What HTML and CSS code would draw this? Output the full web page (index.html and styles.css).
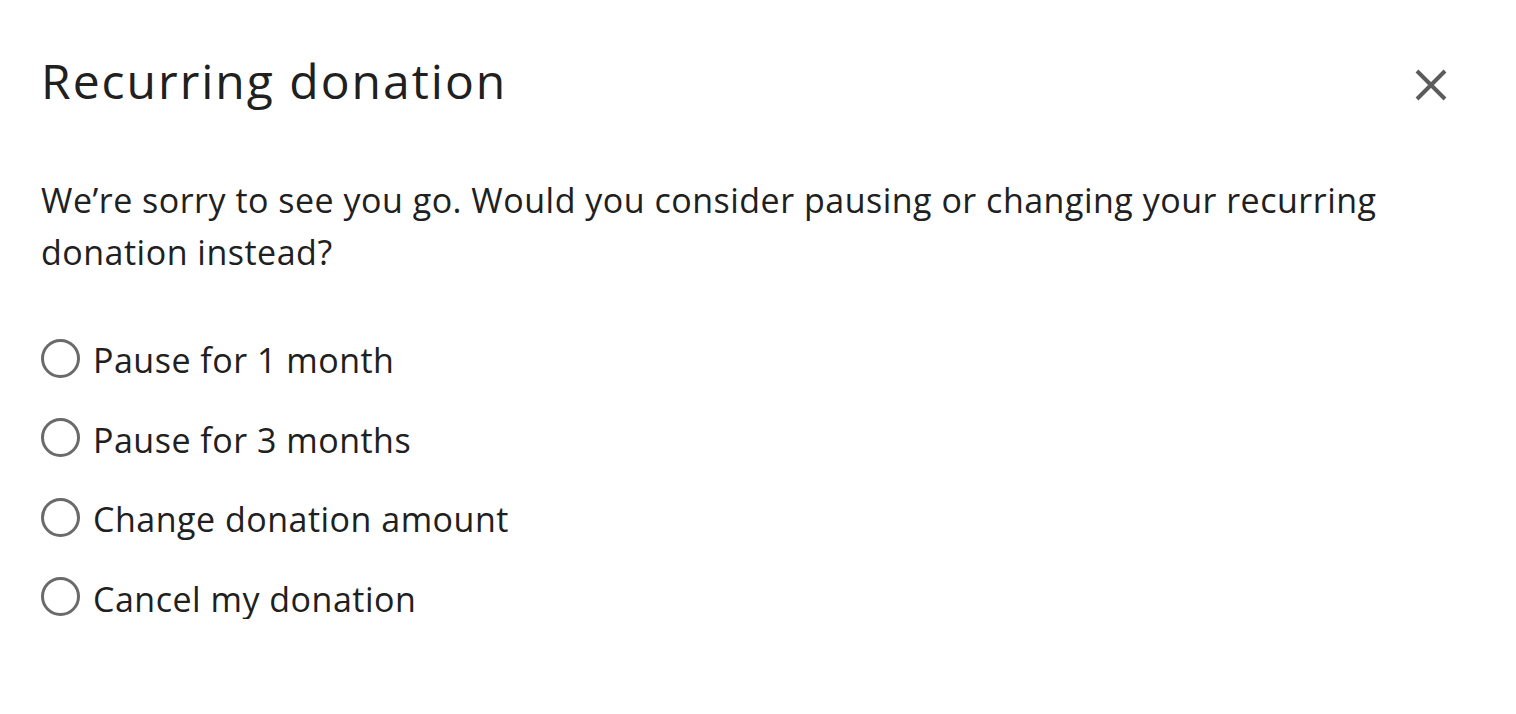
FILE: index.html
```html
<!DOCTYPE html>
<html>
<head>
<meta charset="utf-8">
<link rel="stylesheet" href="styles.css">
</head>
<body>
<div class="dialog">
  <div class="header">
    <h1 class="title">Recurring donation</h1>
    <button class="close" aria-label="Close">
      <svg width="32" height="32" viewBox="0 0 32 32"><path d="M2 2 L30 30 M30 2 L2 30" stroke="#5c5c5c" stroke-width="4" fill="none"/></svg>
    </button>
  </div>
  <p class="intro">We’re sorry to see you go. Would you consider pausing or changing your recurring donation instead?</p>
  <div class="options">
    <label class="option"><span class="radio"></span><span class="label">Pause for 1 month</span></label>
    <label class="option"><span class="radio"></span><span class="label">Pause for 3 months</span></label>
    <label class="option"><span class="radio"></span><span class="label">Change donation amount</span></label>
    <label class="option"><span class="radio"></span><span class="label">Cancel my donation</span></label>
  </div>
</div>
</body>
</html>
```
FILE: styles.css
```css
html, body { margin: 0; padding: 0; background: #fff; }
body { font-family: "Open Sans", "Noto Sans", sans-serif; color: #202020; }
.dialog { padding: 46px 69px 0 41px; }
.header { display: flex; justify-content: space-between; align-items: flex-start; }
.title { margin: 0; font-size: 48px; font-weight: 400; line-height: 70px; letter-spacing: 2px; }
.close { background: none; border: 0; padding: 0; margin-top: 23px; display: flex; cursor: pointer; }
.intro { margin: 58px 0 0 0; font-size: 34px; line-height: 52px; letter-spacing: 0.5px; }
.options { margin-top: 62px; display: flex; flex-direction: column; gap: 39.5px; }
.option { display: flex; align-items: center; gap: 13px; font-size: 34px; line-height: 40px; letter-spacing: 0.5px; }
.radio { box-sizing: border-box; width: 39px; height: 39px; border: 3px solid #6a6a6a; border-radius: 50%; flex: none; margin-top: -4px; }
```
